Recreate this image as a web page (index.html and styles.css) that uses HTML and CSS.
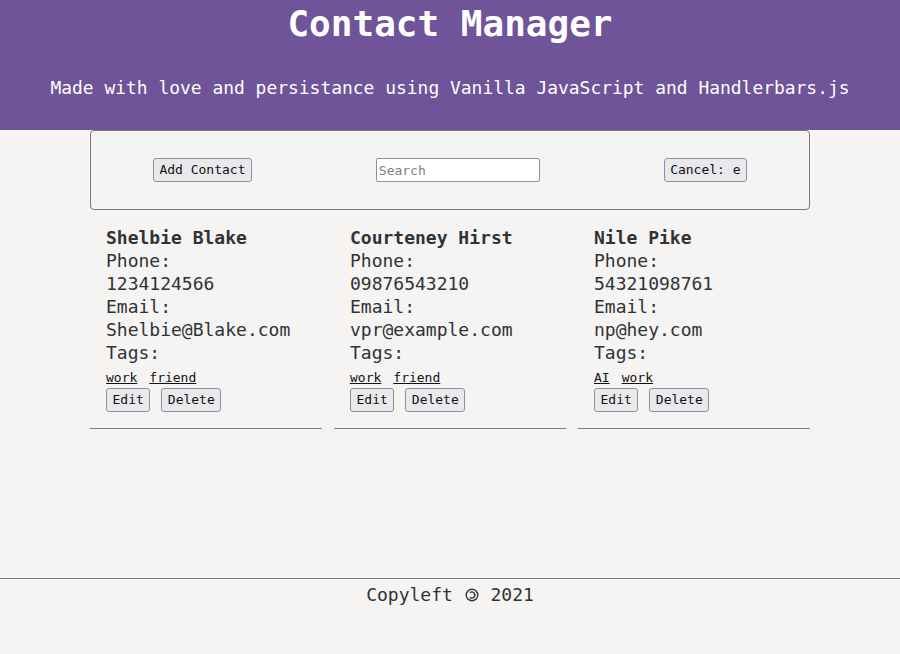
FILE: index.html
```html
<!DOCTYPE html>
<html lang="en">
<head>
<meta charset="utf-8">
<title>Contact Manager</title>
<link rel="stylesheet" href="styles.css">
</head>
<body>
<header class="site-header">
  <h1 class="title">Contact Manager</h1>
  <p class="subtitle">Made with love and persistance using Vanilla JavaScript and Handlerbars.js</p>
</header>
<main class="main">
  <div class="toolbar">
    <button class="btn">Add Contact</button>
    <input class="search" type="text" placeholder="Search">
    <button class="btn">Cancel: e</button>
  </div>
  <div class="contacts">
    <div class="card">
      <div class="name">Shelbie Blake</div>
      <div class="line">Phone:</div>
      <div class="line">1234124566</div>
      <div class="line">Email:</div>
      <div class="line">Shelbie@Blake.com</div>
      <div class="line">Tags:</div>
      <div class="tags"><a class="tag" href="#">work</a><a class="tag" href="#">friend</a></div>
      <div class="actions"><button class="btn">Edit</button><button class="btn">Delete</button></div>
    </div>
    <div class="card">
      <div class="name">Courteney Hirst</div>
      <div class="line">Phone:</div>
      <div class="line">09876543210</div>
      <div class="line">Email:</div>
      <div class="line">vpr@example.com</div>
      <div class="line">Tags:</div>
      <div class="tags"><a class="tag" href="#">work</a><a class="tag" href="#">friend</a></div>
      <div class="actions"><button class="btn">Edit</button><button class="btn">Delete</button></div>
    </div>
    <div class="card">
      <div class="name">Nile Pike</div>
      <div class="line">Phone:</div>
      <div class="line">54321098761</div>
      <div class="line">Email:</div>
      <div class="line">np@hey.com</div>
      <div class="line">Tags:</div>
      <div class="tags"><a class="tag" href="#">AI</a><a class="tag" href="#">work</a></div>
      <div class="actions"><button class="btn">Edit</button><button class="btn">Delete</button></div>
    </div>
  </div>
</main>
<footer class="site-footer">Copyleft <svg class="copyleft" width="14" height="14" viewBox="0 0 14 14" aria-label="copyleft"><circle cx="7" cy="7" r="5.8" fill="none" stroke="#2f3336" stroke-width="1.4"/><path d="M5 4.6 A3 3 0 1 1 5 9.4" fill="none" stroke="#2f3336" stroke-width="1.4"/></svg> 2021</footer>
</body>
</html>
```
FILE: styles.css
```css
html, body {
  margin: 0;
  padding: 0;
}
body {
  background: #f5f4f2;
  color: #2f3336;
  font-family: "DejaVu Sans Mono", "Liberation Mono", monospace;
  font-size: 18px;
  display: flex;
  flex-direction: column;
  min-height: 100vh;
}
.site-header {
  background: #6f5499;
  color: #ffffff;
  text-align: center;
  height: 130px;
  box-sizing: border-box;
}
.title {
  margin: 0;
  font-size: 36px;
  line-height: 48px;
  font-weight: bold;
}
.subtitle {
  margin: 29px 0 0;
  font-size: 17.95px;
  line-height: 22px;
}
.main {
  flex: 1;
  width: 720px;
  margin: 0 auto;
}
.toolbar {
  height: 80px;
  box-sizing: border-box;
  border: 1px solid #7a7a7a;
  border-radius: 4px;
  background: #f4f4f4;
  display: flex;
  align-items: center;
  justify-content: space-around;
}
.btn {
  font-family: "DejaVu Sans Mono", monospace;
  font-size: 13px;
  color: #111;
  background: #e9e9ed;
  border: 1px solid #8f8f9d;
  border-radius: 3px;
  padding: 0 5.5px;
  height: 24px;
  line-height: 22px;
}
.search {
  font-family: "DejaVu Sans Mono", monospace;
  font-size: 13px;
  width: 164px;
  height: 24px;
  box-sizing: border-box;
  border: 1px solid #8f8f9d;
  border-radius: 2px;
  background: #fff;
  padding: 0 2px;
}
.search::placeholder {
  color: #808080;
}
.contacts {
  display: grid;
  grid-template-columns: repeat(3, 1fr);
  column-gap: 12px;
  margin-top: 16px;
}
.card {
  padding: 0 16px 16px;
  border-bottom: 1px solid #7a7a7a;
  line-height: 23px;
}
.name {
  font-weight: bold;
}
.tags {
  display: flex;
  gap: 12px;
  font-size: 13px;
  line-height: 18px;
  margin-top: 5px;
}
.tag {
  color: #111;
  text-decoration: underline;
}
.actions {
  display: flex;
  gap: 11px;
  margin-top: 1px;
}
.site-footer {
  border-top: 1px solid #7a7a7a;
  text-align: center;
  padding-top: 4px;
  line-height: 24px;
  height: 71px;
}
.copyleft {
  vertical-align: -1px;
  margin: 0 1px;
}
```
